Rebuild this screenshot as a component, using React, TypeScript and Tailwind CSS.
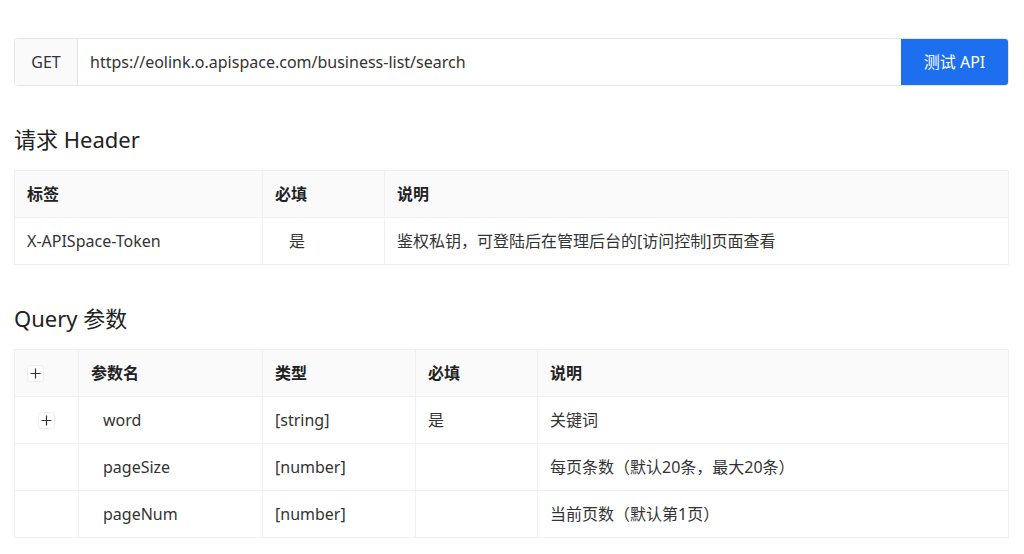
const font = { fontFamily: '"Noto Sans", "Noto Sans CJK SC", sans-serif' };

function Plus() {
  return (
    <span className="inline-flex h-[17px] w-[17px] items-center justify-center rounded-[3px] border border-[#f0f0f0] bg-white">
      <svg width="11" height="11" viewBox="0 0 11 11">
        <path d="M5.5 0.5v10M0.5 5.5h10" stroke="#333" strokeWidth="1.2" />
      </svg>
    </span>
  );
}

const th = "h-[47px] border-r border-b border-[#f0f0f0] bg-[#fafafa] px-3 text-left font-bold text-[16px] text-[#222]";
const td = "h-[47px] border-r border-b border-[#f0f0f0] px-3 text-[16px] text-[#333]";

export default function App() {
  return (
    <div className="min-h-[554px] bg-white px-[14px] pt-[38px] text-[#333]" style={font}>
      <div className="flex h-[48px] w-[995px] overflow-hidden rounded border border-[#e5e5e5]">
        <div className="flex w-[63px] items-center justify-center border-r border-[#e5e5e5] bg-[#fafafa] text-[16px]">GET</div>
        <div className="flex flex-1 items-center px-3 text-[16px]">https://eolink.o.apispace.com/business-list/search</div>
        <button className="w-[107px] bg-[#1d6ff0] text-[16px] text-white">测试 API</button>
      </div>

      <h2 className="mt-[38px] text-[22px] leading-[30px] text-[#222]">请求 Header</h2>
      <table className="mt-[16px] w-[995px] border-collapse border-l border-t border-[#f0f0f0]">
        <thead>
          <tr>
            <th className={`${th} w-[248px]`}>标签</th>
            <th className={`${th} w-[122px]`}>必填</th>
            <th className={th}>说明</th>
          </tr>
        </thead>
        <tbody>
          <tr>
            <td className={td}>X-APISpace-Token</td>
            <td className={`${td} pl-[26px]`}>是</td>
            <td className={td}>鉴权私钥，可登陆后在管理后台的[访问控制]页面查看</td>
          </tr>
        </tbody>
      </table>

      <h2 className="mt-[38px] text-[22px] leading-[30px] text-[#222]">Query 参数</h2>
      <table className="mt-[16px] w-[995px] border-collapse border-l border-t border-[#f0f0f0]">
        <thead>
          <tr>
            <th className={`${th} w-[64px] text-center`}><Plus /></th>
            <th className={`${th} w-[184px]`}>参数名</th>
            <th className={`${th} w-[153px]`}>类型</th>
            <th className={`${th} w-[122px]`}>必填</th>
            <th className={th}>说明</th>
          </tr>
        </thead>
        <tbody>
          {[
            ["word", "[string]", "是", "关键词", true],
            ["pageSize", "[number]", "", "每页条数（默认20条，最大20条）", false],
            ["pageNum", "[number]", "", "当前页数（默认第1页）", false],
          ].map(([n, t, r, d, p]) => (
            <tr key={n as string}>
              <td className={`${td} text-center`}>{p ? <Plus /> : null}</td>
              <td className={`${td} pl-[24px]`}>{n}</td>
              <td className={td}>{t}</td>
              <td className={td}>{r}</td>
              <td className={td}>{d}</td>
            </tr>
          ))}
        </tbody>
      </table>
    </div>
  );
}
